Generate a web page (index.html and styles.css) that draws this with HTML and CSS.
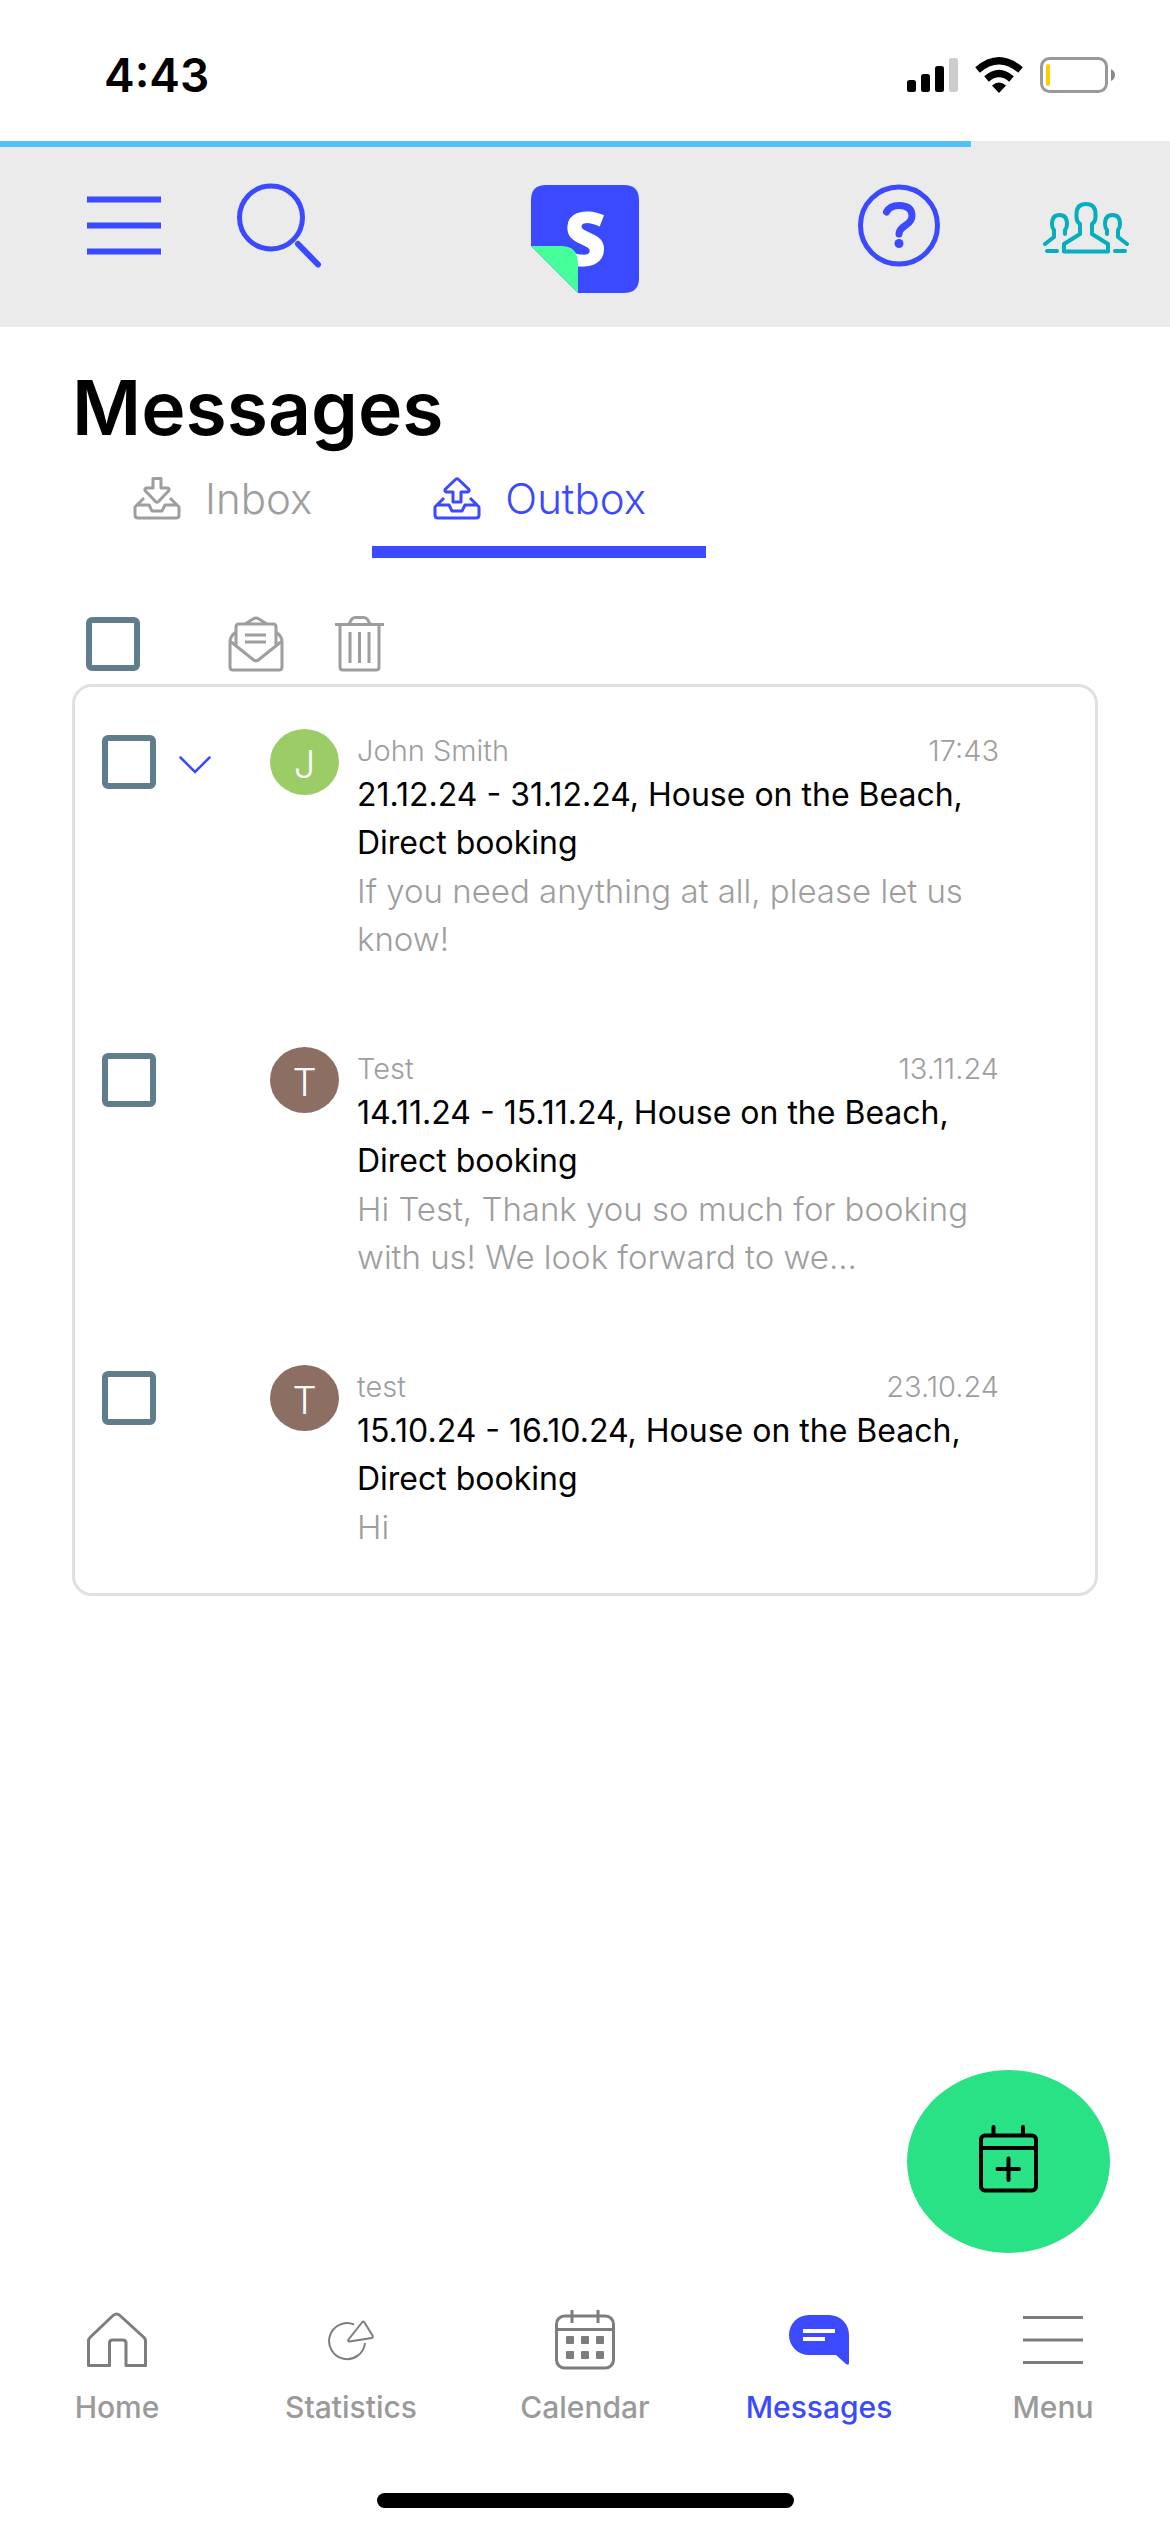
FILE: index.html
```html
<!DOCTYPE html>
<html lang="en">
<head>
<meta charset="utf-8">
<meta name="viewport" content="width=device-width, initial-scale=1">
<title>Messages</title>
<link rel="stylesheet" href="styles.css">
</head>
<body>
<div class="status">
  <time class="clock">4:43</time>
  <div class="status-icons">
    <svg width="51" height="36" viewBox="0 0 51 36" aria-hidden="true">
      <rect x="0" y="23" width="9" height="12" rx="2.5"/>
      <rect x="14" y="17" width="9" height="18" rx="2.5"/>
      <rect x="28" y="9" width="9" height="26" rx="2.5"/>
      <rect x="42" y="1" width="9" height="34" rx="2.5" fill="#ccc"/>
    </svg>
    <svg width="50" height="36" viewBox="0 0 50 36" aria-hidden="true">
      <path d="M25 36 L18 28.500 Q25 22.500 32 28.500 Z"/>
      <path d="M12.500 22 Q25 11 37.500 22 M3.500 13 Q25 -5.500 46.500 13" fill="none" stroke="#000" stroke-width="7"/>
    </svg>
    <svg width="76" height="36" viewBox="0 0 76 36" aria-hidden="true">
      <rect x="1.500" y="1.500" width="65" height="33" rx="8" fill="none" stroke="#999" stroke-width="3"/>
      <path d="M71 12 Q75 14 75 18 Q75 22 71 24 Z" fill="#8a8a8a"/>
      <rect x="6" y="7" width="4" height="22" rx="2" fill="#ffcc00"/>
    </svg>
  </div>
</div>

<header class="header">
  <progress class="loader" value="83" max="100" aria-label="Loading"></progress>
  <div class="toolbar">
    <div class="tools tools-start">
      <button class="tool" aria-label="Open menu">
        <svg width="74" height="120" viewBox="0 0 74 120"><path d="M0 19.500H74M0 45.500H74M0 71.500H74" stroke="currentColor" stroke-width="6"/></svg>
      </button>
      <button class="tool" aria-label="Search">
        <svg width="86" height="120" viewBox="0 0 86 120" fill="none" stroke="currentColor"><circle cx="34" cy="37.500" r="31.500" stroke-width="5"/><path d="M61 64 L81 84.500" stroke-width="6" stroke-linecap="round"/></svg>
      </button>
    </div>
    <a class="logo" href="#" aria-label="Home page">
      <svg width="108" height="120" viewBox="0 -5 108 120">
        <path d="M15 0H93Q108 0 108 15V93Q108 108 93 108H47L0 61V15Q0 0 15 0Z" fill="#3b49ff"/>
        <text class="logo-letter" x="54" y="81" text-anchor="middle">S</text>
        <path d="M0 61H31Q47 61 47 79V108Z" fill="#45ff9b"/>
      </svg>
    </a>
    <div class="tools tools-end">
      <button class="tool" aria-label="Help">
        <svg width="82" height="120" viewBox="0 0 82 120" fill="none" stroke="currentColor"><circle cx="41" cy="45.500" r="38.500" stroke-width="5"/><path d="M28.500 32Q32 25.500 41 25.500Q54 25.500 54 36Q54 41 48 45Q41 49.500 41 54" stroke-width="7" stroke-linecap="round"/><circle cx="41" cy="63.500" r="4.500" fill="currentColor" stroke="none"/></svg>
      </button>
      <button class="tool tool-teal" aria-label="Community">
        <svg width="86" height="120" viewBox="0 -20 86 120" fill="none" stroke="currentColor" stroke-width="4" stroke-linecap="round" stroke-linejoin="round">
          <path d="M37 24Q33.500 22 33.500 17V14Q33.500 4 43 4Q52.500 4 52.500 14V17Q52.500 22 49 24V34L65 44V51.500H21V44L37 34Z"/>
          <path d="M2 44L11 37V30Q9 28 9 24Q9 15 16.500 15Q24 15 24 24Q24 28 22 30V34M4 51H14"/>
          <path d="M84 44L75 37V30Q77 28 77 24Q77 15 69.500 15Q62 15 62 24Q62 28 64 30V34M82 51H72"/>
        </svg>
      </button>
    </div>
  </div>
</header>

<main class="main">
  <h1 class="title">Messages</h1>
  <nav class="tabs" aria-label="Mailboxes">
    <a class="tab" href="#inbox">
      <svg width="48" height="43" viewBox="0 0 48 43" class="line-icon"><path d="M11 21L2 30V38Q2 41 5 41H43Q46 41 46 38V30L37 21M3 28H16L19 34H29L32 28H45M20 1.500H28V11H35Q37 12 35.500 14L25.500 24.500Q24 26 22.500 24.500L12.500 14Q11 12 13 11H20Z"/></svg>
      Inbox
    </a>
    <a class="tab tab-active" href="#outbox" aria-current="page">
      <svg width="48" height="43" viewBox="0 0 48 43" class="line-icon"><path d="M11 21L2 30V38Q2 41 5 41H43Q46 41 46 38V30L37 21M3 28H16L19 34H29L32 28H45M20 25H28V15H35Q37 14 35.500 12L25.500 2.500Q24 1 22.500 2.500L12.500 12Q11 14 13 15H20Z"/></svg>
      Outbox
    </a>
  </nav>

  <div class="actions">
    <input class="check" type="checkbox" aria-label="Select all messages">
    <div class="action-buttons">
      <button class="action" aria-label="Mark as read">
        <svg width="56" height="56" viewBox="0 0 56 56"><path d="M8 31V11Q8 8 11 8H45Q48 8 48 11V31M17 8L25 3Q28 1 31 3L39 8M8 16Q2 20 2 26V51Q2 54 5 54H51Q54 54 54 51V26Q54 20 48 16M2 25L25 43.500Q28 46 31 43.500L54 25M17 19H38M17 26H38"/></svg>
      </button>
      <button class="action" aria-label="Delete">
        <svg width="49" height="56" viewBox="0 0 49 56"><path d="M0 8.500H49M14 8L16.500 3.500Q18 1.500 20 1.500H29Q31 1.500 32.500 3.500L35 8M5 9V51Q5 54 8 54H41Q44 54 44 51V9M15 16V47M24.500 16V47M34 16V47"/></svg>
      </button>
    </div>
  </div>

  <ul class="card">
    <li class="row">
      <input class="check" type="checkbox" aria-label="Select message from John Smith">
      <button class="expand" aria-label="Expand thread">
        <svg width="32" height="18" viewBox="0 0 32 18"><path d="M1.500 1.500L16 16L30.500 1.500" fill="none" stroke="currentColor" stroke-width="2.500" stroke-linecap="round"/></svg>
      </button>
      <span class="avatar avatar-green">J</span>
      <div class="message">
        <div class="meta"><span>John Smith</span><time>17:43</time></div>
        <p class="subject">21.12.24 - 31.12.24, House on the Beach, Direct booking</p>
        <p class="preview">If you need anything at all, please let us know!</p>
      </div>
    </li>
    <li class="row">
      <input class="check" type="checkbox" aria-label="Select message from Test, 13.11.24">
      <span class="avatar avatar-brown">T</span>
      <div class="message">
        <div class="meta"><span>Test</span><time>13.11.24</time></div>
        <p class="subject">14.11.24 - 15.11.24, House on the Beach, Direct booking</p>
        <p class="preview">Hi Test, Thank you so much for booking with us! We look forward to we...</p>
      </div>
    </li>
    <li class="row">
      <input class="check" type="checkbox" aria-label="Select message from test, 23.10.24">
      <span class="avatar avatar-brown">T</span>
      <div class="message">
        <div class="meta"><span>test</span><time>23.10.24</time></div>
        <p class="subject">15.10.24 - 16.10.24, House on the Beach, Direct booking</p>
        <p class="preview">Hi</p>
      </div>
    </li>
  </ul>
</main>

<button class="fab" aria-label="New booking">
  <svg width="59" height="68" viewBox="0 0 59 68" fill="none" stroke="#000" stroke-width="4" stroke-linecap="round"><rect x="2" y="10.500" width="55" height="55" rx="4"/><path d="M2 23H57M14.500 2V9M44 2V9M29.500 33.500V55M18.500 44H40"/></svg>
</button>

<footer class="footer">
  <nav class="bottom-nav" aria-label="Main">
    <a class="nav-item" href="#home">
      <svg width="60" height="60" viewBox="0 -2 60 60" class="nav-icon"><path d="M1.500 53.500V29Q1.500 27 3 25.500L25.500 4Q29.500 0 33.500 4L57 25.500Q58.500 27 58.500 29V53.500H39V31Q39 28 36 28H25.500Q22.500 28 22.500 31V53.500Z"/></svg>
      Home
    </a>
    <a class="nav-item" href="#statistics">
      <svg width="46" height="60" viewBox="0 -10 46 60" class="nav-icon nav-icon-thin"><path d="M26 4.500A18 18 0 1 0 37 23M20.500 19.500L34 2.500Q35.500 0.500 36.500 2.500L44.500 15.500Q45.500 17.500 43.500 18L21.500 21.500Q19.500 21.500 20.500 19.500Z"/></svg>
      Statistics
    </a>
    <a class="nav-item" href="#calendar">
      <svg width="60" height="60" viewBox="0 0 60 60" class="nav-icon"><rect x="1.500" y="6" width="57" height="52" rx="8"/><path d="M2 19.500H58M17 0V13M43 0V13"/><g fill="currentColor" stroke="none"><rect x="11" y="26" width="8" height="8" rx="1"/><rect x="26" y="26" width="8" height="8" rx="1"/><rect x="41" y="26" width="8" height="8" rx="1"/><rect x="11" y="41" width="8" height="8" rx="1"/><rect x="26" y="41" width="8" height="8" rx="1"/><rect x="41" y="41" width="8" height="8" rx="1"/></g></svg>
      Calendar
    </a>
    <a class="nav-item nav-item-active" href="#messages" aria-current="page">
      <svg width="60" height="60" viewBox="0 -5 60 60"><path d="M20 0H40A20 20 0 0 1 60 20V48Q60 51 57 49L47 40H20A20 20 0 0 1 20 0Z" fill="#3b49ff"/><path d="M14 16H46M14 24H36" stroke="#fff" stroke-width="4"/></svg>
      Messages
    </a>
    <a class="nav-item" href="#menu">
      <svg width="60" height="60" viewBox="0 0 60 60" class="nav-icon"><path d="M0 7.500H60M0 30H60M0 52.500H60"/></svg>
      Menu
    </a>
  </nav>
  <div class="home-indicator"></div>
</footer>
</body>
</html>
```
FILE: styles.css
```css
*, *::before, *::after { box-sizing: border-box; }

body {
  margin: 0;
  min-height: 100vh;
  display: flex;
  flex-direction: column;
  background: #fff;
  color: #000;
  font-family: "Inter", "Liberation Sans", sans-serif;
}

button { padding: 0; border: 0; background: none; cursor: pointer; }
a { color: inherit; text-decoration: none; }
svg { display: block; flex: none; }
h1, p, ul { margin: 0; padding: 0; }

/* Status bar */
.status {
  height: 141px;
  padding: 8px 54px 0 104px;
  display: flex;
  align-items: center;
  justify-content: space-between;
}
.clock { font-size: 46px; font-weight: 600; }
.status-icons { display: flex; gap: 16px; }

/* Header */
.header { background: #ebebeb; color: #3b49ff; }
.loader {
  display: block;
  width: 100%;
  height: 6px;
  border: 0;
  appearance: none;
  background: #ebebeb;
}
.loader::-webkit-progress-bar { background: #ebebeb; }
.loader::-webkit-progress-value { background: #4fc3f7; }
.loader::-moz-progress-bar { background: #4fc3f7; }
.toolbar {
  display: grid;
  grid-template-columns: 1fr auto 1fr;
  padding: 33px 41px 27px;
}
.tools { display: flex; }
.tools-start { gap: 76px; padding-left: 46px; }
.tools-end { gap: 103px; justify-content: flex-end; }
.tool { color: inherit; }
.tool-teal { color: #06adbf; }
.logo-letter { fill: #fff; font-family: "Open Sans", sans-serif; font-size: 74px; font-weight: 800; }

/* Content */
.main { flex: 1; padding: 35px 72px 0; }
.title { font-size: 75px; font-weight: 600; line-height: 92px; }

.tabs { display: flex; margin-top: 5px; }
.tab {
  display: flex;
  align-items: center;
  gap: 24px;
  height: 99px;
  padding: 0 60px 9px 61px;
  border-bottom: 12px solid transparent;
  color: #9e9e9e;
  font-size: 42px;
  font-weight: 300;
}
.tab-active { border-color: #3b49ff; color: #3b49ff; }
.line-icon { fill: none; stroke: currentColor; stroke-width: 3; stroke-linejoin: round; }

.actions {
  display: flex;
  align-items: center;
  gap: 88px;
  padding: 58px 14px 12px;
}
.action-buttons { display: flex; gap: 51px; }
.action { color: #9e9e9e; }
.action svg { fill: none; stroke: currentColor; stroke-width: 3; }

.check {
  appearance: none;
  flex: none;
  width: 54px;
  height: 54px;
  margin: 0;
  border: 6px solid #607d8b;
  border-radius: 6px;
  background: #fff;
}
.check:checked { background: #607d8b; }

.card {
  border: 3px solid #e0e0e0;
  border-radius: 20px;
  list-style: none;
}
.row {
  display: grid;
  grid-template-columns: 54px 78px 69px 1fr;
  grid-template-areas: "check expand avatar message";
  column-gap: 18px;
  align-items: start;
  padding: 42px 96px 42px 27px;
}
.row .check { grid-area: check; margin-top: 6px; }
.expand { grid-area: expand; margin: 27px 0 0 5px; width: 32px; color: #3b49ff; }
.avatar {
  grid-area: avatar;
  display: grid;
  place-items: center;
  width: 69px;
  height: 66px;
  padding-top: 4px;
  border-radius: 50%;
  color: #fff;
  font-size: 38px;
  font-weight: 300;
}
.avatar-green { background: #9ccc65; }
.avatar-brown { background: #8d6e63; }
.message { grid-area: message; }
.meta {
  display: flex;
  justify-content: space-between;
  height: 42px;
  color: #9e9e9e;
  font-size: 29px;
  font-weight: 300;
  line-height: 44px;
}
.subject, .preview { line-height: 48px; }
.subject { font-size: 32px; }
.preview { color: #9e9e9e; font-size: 33px; font-weight: 300; }

/* Floating action button */
.fab {
  position: fixed;
  right: 60px;
  bottom: 279px;
  display: grid;
  place-items: center;
  width: 203px;
  height: 183px;
  padding-bottom: 5px;
  border-radius: 50%;
  background: #2ae286;
}

/* Bottom navigation */
.footer { padding-bottom: 24px; }
.bottom-nav { display: grid; grid-template-columns: repeat(5, 1fr); }
.nav-item {
  display: flex;
  flex-direction: column;
  align-items: center;
  gap: 19px;
  color: #9a9a9a;
  font-size: 30px;
  font-weight: 500;
  line-height: 36px;
}
.nav-item-active { color: #3b49ff; }
.nav-icon { color: #7d7d7d; fill: none; stroke: currentColor; stroke-width: 3; stroke-linejoin: round; }
.nav-icon-thin { stroke-width: 2; }
.home-indicator {
  width: 417px;
  height: 15px;
  margin: 68px auto 0;
  border-radius: 8px;
  background: #000;
}
```
